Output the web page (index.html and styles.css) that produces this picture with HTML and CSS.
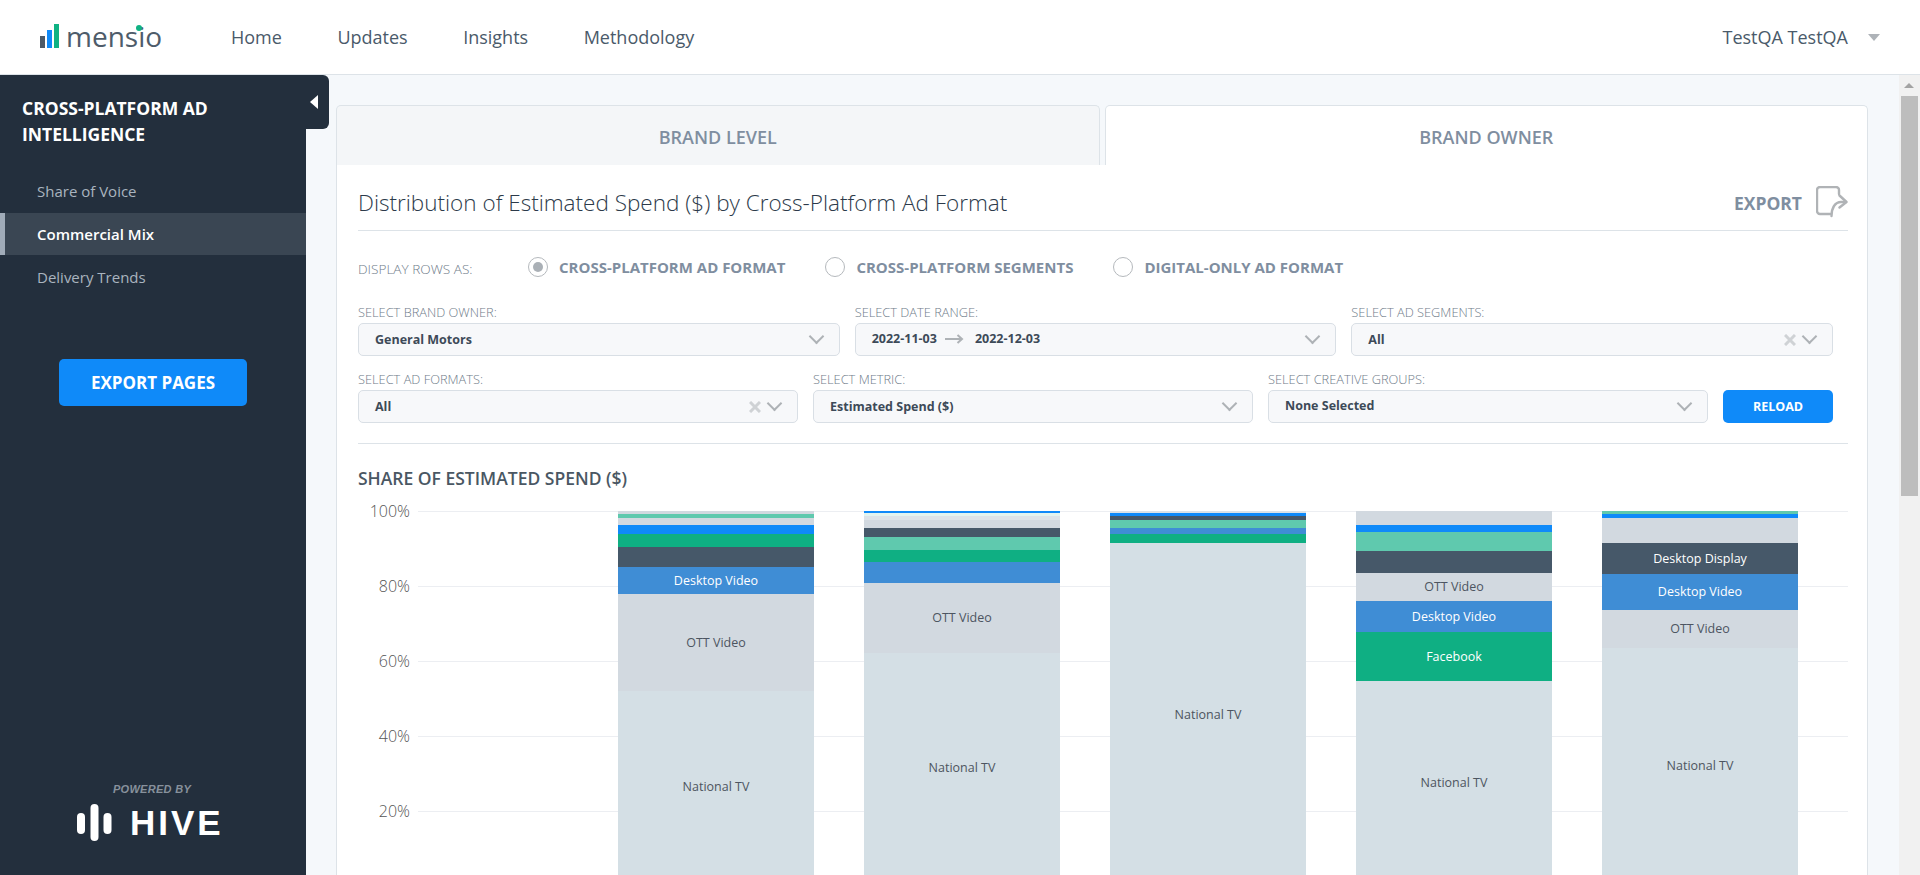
FILE: index.html
```html
<!DOCTYPE html>
<html lang="en">
<head>
<meta charset="utf-8">
<title>Mensio</title>
<link rel="stylesheet" href="styles.css">
</head>
<body>
<header class="topbar">
  <div class="logo">
    <svg class="logo-bars" width="19" height="24" viewBox="0 0 19 24"><rect x="0" y="12" width="5" height="12" fill="#4c5a68"/><rect x="7" y="6" width="5" height="18" fill="#0f8af9"/><rect x="14" y="0" width="5" height="24" fill="#0fb283"/></svg>
    <span class="logo-word">mensio<i class="logo-dot"></i></span>
  </div>
  <nav class="topnav">
    <a>Home</a><a>Updates</a><a>Insights</a><a>Methodology</a>
  </nav>
  <div class="user"><span>TestQA TestQA</span><i class="user-caret"></i></div>
</header>
<div class="shell">
  <aside class="sidebar">
    <div class="side-tab"><i class="side-caret"></i></div>
    <h2 class="side-title">CROSS-PLATFORM AD INTELLIGENCE</h2>
    <ul class="side-menu">
      <li>Share of Voice</li>
      <li class="active">Commercial Mix</li>
      <li>Delivery Trends</li>
    </ul>
    <button class="export-pages">EXPORT PAGES</button>
    <div class="powered">
      <div class="powered-by">POWERED BY</div>
      <div class="hive">
        <svg width="35" height="37" viewBox="0 0 35 37"><rect x="0" y="9" width="8" height="21" rx="4" fill="#fff"/><rect x="13.5" y="0" width="8" height="37" rx="4" fill="#fff"/><rect x="26.5" y="9" width="8" height="21" rx="4" fill="#fff"/></svg>
        <span>HIVE</span>
      </div>
    </div>
  </aside>
  <main class="main">
    <div class="tabs">
      <div class="tab">BRAND LEVEL</div>
      <div class="tab current">BRAND OWNER</div>
    </div>
    <section class="card">
      <div class="card-head">
        <h1>Distribution of Estimated Spend ($) by Cross-Platform Ad Format</h1>
        <div class="export">
          <span>EXPORT</span>
          <svg width="32" height="32" viewBox="0 0 32 32" fill="none" stroke="#b0b3b6" stroke-width="2.4" stroke-linecap="round" stroke-linejoin="round"><path d="M23 8V4a3 3 0 0 0-3-3H4a3 3 0 0 0-3 3v21a3 3 0 0 0 3 3h10"/><path d="M23.500 9.500L30.500 16L23.500 21.500"/><path d="M30 16H25C19 16 15.500 22 15.500 30"/></svg>
        </div>
      </div>
      <div class="radios">
        <span class="radios-label">DISPLAY ROWS AS:</span>
        <label class="radio checked"><i></i>CROSS-PLATFORM AD FORMAT</label>
        <label class="radio"><i></i>CROSS-PLATFORM SEGMENTS</label>
        <label class="radio"><i></i>DIGITAL-ONLY AD FORMAT</label>
      </div>
      <div class="filters">
        <div class="filter">
          <div class="filter-label">SELECT BRAND OWNER:</div>
          <div class="select"><span>General Motors</span><i class="chev"></i></div>
        </div>
        <div class="filter">
          <div class="filter-label">SELECT DATE RANGE:</div>
          <div class="select"><span class="dates raised">2022-11-03<svg width="20" height="10" viewBox="0 0 20 10" fill="none" stroke="#aeb2b6" stroke-width="2"><path d="M1 5H18M13.500 1L18 5L13.500 9"/></svg>2022-12-03</span><i class="chev"></i></div>
        </div>
        <div class="filter">
          <div class="filter-label">SELECT AD SEGMENTS:</div>
          <div class="select"><span>All</span><svg class="clear" width="12" height="12" viewBox="0 0 12 12" fill="none" stroke="#cfd2d5" stroke-width="3"><path d="M1 1L11 11M11 1L1 11"/></svg><i class="chev"></i></div>
        </div>
      </div>
      <div class="filters">
        <div class="filter">
          <div class="filter-label">SELECT AD FORMATS:</div>
          <div class="select"><span>All</span><svg class="clear" width="12" height="12" viewBox="0 0 12 12" fill="none" stroke="#cfd2d5" stroke-width="3"><path d="M1 1L11 11M11 1L1 11"/></svg><i class="chev"></i></div>
        </div>
        <div class="filter">
          <div class="filter-label">SELECT METRIC:</div>
          <div class="select"><span>Estimated Spend ($)</span><i class="chev"></i></div>
        </div>
        <div class="filter">
          <div class="filter-label">SELECT CREATIVE GROUPS:</div>
          <div class="select"><span class="raised">None Selected</span><i class="chev"></i></div>
        </div>
        <button class="reload">RELOAD</button>
      </div>
      <hr class="rule">
      <h3 class="chart-title">SHARE OF ESTIMATED SPEND ($)</h3>
      <div class="chart">
        <div class="axis">
          <span>100%</span><span>80%</span><span>60%</span><span>40%</span><span>20%</span>
        </div>
        <div class="plot">
          <div class="grid"><i></i><i></i><i></i><i></i><i></i></div>
          <div class="bars">
            <div class="bar">
              <div class="seg gray" style="height:3px"></div>
              <div class="seg teal" style="height:4px"></div>
              <div class="seg gray" style="height:7px"></div>
              <div class="seg blue" style="height:9px"></div>
              <div class="seg green" style="height:13px"></div>
              <div class="seg navy" style="height:20px"></div>
              <div class="seg mid" style="height:27px">Desktop Video</div>
              <div class="seg gray" style="height:97px">OTT Video</div>
              <div class="seg tv" style="height:192px">National TV</div>
            </div>
            <div class="bar">
              <div class="seg blue" style="height:2px"></div>
              <div class="seg pale" style="height:3px"></div>
              <div class="seg pale2" style="height:4px"></div>
              <div class="seg gray" style="height:8px"></div>
              <div class="seg navy" style="height:9px"></div>
              <div class="seg teal" style="height:13px"></div>
              <div class="seg green" style="height:12px"></div>
              <div class="seg mid" style="height:21px"></div>
              <div class="seg gray" style="height:70px">OTT Video</div>
              <div class="seg tv" style="height:230px">National TV</div>
            </div>
            <div class="bar">
              <div class="seg pale2" style="height:2px"></div>
              <div class="seg blue" style="height:3px"></div>
              <div class="seg navy" style="height:4px"></div>
              <div class="seg teal" style="height:8px"></div>
              <div class="seg mid" style="height:6px"></div>
              <div class="seg green" style="height:9px"></div>
              <div class="seg tv" style="height:343px">National TV</div>
            </div>
            <div class="bar">
              <div class="seg gray" style="height:14px"></div>
              <div class="seg blue" style="height:7px"></div>
              <div class="seg teal" style="height:19px"></div>
              <div class="seg navy" style="height:22px"></div>
              <div class="seg gray" style="height:28px">OTT Video</div>
              <div class="seg mid" style="height:31px">Desktop Video</div>
              <div class="seg green" style="height:49px">Facebook</div>
              <div class="seg tv" style="height:203px">National TV</div>
            </div>
            <div class="bar">
              <div class="seg teal" style="height:3px"></div>
              <div class="seg blue" style="height:4px"></div>
              <div class="seg gray" style="height:8px"></div>
              <div class="seg gray" style="height:17px"></div>
              <div class="seg navy" style="height:31px">Desktop Display</div>
              <div class="seg mid" style="height:36px">Desktop Video</div>
              <div class="seg gray" style="height:38px">OTT Video</div>
              <div class="seg tv" style="height:236px">National TV</div>
            </div>
          </div>
        </div>
      </div>
    </section>
  </main>
  <div class="scrollbar"><i class="scroll-up"></i><div class="scroll-thumb"></div></div>
</div>
</body>
</html>
```

FILE: styles.css
```css
* { box-sizing: border-box; }
html, body { margin: 0; height: 875px; overflow: hidden; }
body { font-family: "Open Sans", "Liberation Sans", sans-serif; color: #3d4a58; background: #fff; display: flex; flex-direction: column; }
h1, h2, h3, ul { margin: 0; padding: 0; }

/* top bar */
.topbar { flex: 0 0 75px; display: flex; align-items: center; background: #fff; border-bottom: 1px solid #dde3e8; padding-left: 40px; padding-right: 40px; }
.logo { display: flex; align-items: flex-end; width: 191px; height: 24px; margin-top: -2px; }
.logo-bars { flex: none; }
.logo-word { position: relative; font-size: 28px; line-height: 24px; color: #4e5c6a; margin-left: 7px; height: 24px; }
.logo-dot { position: absolute; left: 70px; top: 1px; width: 6px; height: 6px; border-radius: 50%; background: #0fb283; }
.topnav { display: flex; gap: 55.5px; font-size: 18px; color: #4a5a6a; }
.user { margin-left: auto; display: flex; align-items: center; gap: 20px; font-size: 18px; color: #4a5a6a; }
.user-caret { width: 0; height: 0; border-left: 6px solid transparent; border-right: 6px solid transparent; border-top: 7px solid #aeb3b8; }

.shell { flex: 1; display: flex; min-height: 0; }

/* sidebar */
.sidebar { position: relative; flex: 0 0 306px; background: #232f3d; display: flex; flex-direction: column; }
.side-tab { position: absolute; left: 306px; top: 0; width: 23px; height: 54px; background: #232f3d; border-radius: 0 6px 6px 0; display: flex; align-items: center; }
.side-caret { width: 0; height: 0; margin-left: 4px; border-top: 7.5px solid transparent; border-bottom: 7.5px solid transparent; border-right: 8px solid #fff; }
.side-title { font-size: 17.5px; line-height: 26px; font-weight: 700; color: #fff; padding: 20px 60px 0 22px; }
.side-menu { list-style: none; margin-top: 23px; font-size: 15px; color: #a9b4bf; }
.side-menu li { height: 42px; line-height: 42px; padding-left: 37px; margin-bottom: 1px; }
.side-menu li.active { background: #3a4653; color: #fff; font-weight: 600; border-left: 5px solid #a0abb8; padding-left: 32px; }
.export-pages { align-self: flex-start; margin: 60px 0 0 59px; width: 188px; height: 47px; border: 0; border-radius: 5px; background: #0f8af9; color: #fff; font: 700 17px "Open Sans", sans-serif; }
.powered { margin-top: auto; padding: 0 0 34px 77px; }
.powered-by { width: 150px; text-align: center; font: italic 700 11px "Liberation Sans", sans-serif; color: #87919c; margin-bottom: 9px; letter-spacing: 0.3px; }
.hive { display: flex; align-items: center; gap: 18px; color: #fff; font: 700 35px/37px "Liberation Sans", sans-serif; letter-spacing: 3px; }

/* main */
.main { flex: 1; min-width: 0; background: #f5f8fb; padding: 30px 31px 0 30px; }
.tabs { display: flex; gap: 5px; height: 60px; }
.tab { flex: 1; display: flex; align-items: center; justify-content: center; padding-top: 3px; font-size: 18px; font-weight: 600; color: #7f8ea0; background: #f4f6f8; border: 1px solid #dde3e8; border-bottom: 0; border-radius: 5px 5px 0 0; }
.tab.current { background: #fff; }
.card { background: #fff; border-left: 1px solid #dde3e8; border-right: 1px solid #dde3e8; height: 720px; padding: 0 19px 0 21px; }
.card-head { height: 66px; display: flex; align-items: center; justify-content: space-between; border-bottom: 1px solid #dde3e8; padding-top: 10px; }
.card-head h1 { font-size: 22.5px; font-weight: 300; color: #2c3a4a; }
.export { display: flex; align-items: center; gap: 14px; font-size: 17.5px; font-weight: 700; color: #7f8ea0; }
.export svg { display: block; margin-top: -1px; }

.radios { display: flex; align-items: center; gap: 40px; height: 74px; padding-bottom: 2px; font-size: 15px; }
.radios-label { color: #6f7c8a; flex: 0 0 130px; white-space: nowrap; font-size: 13.6px; font-weight: 300; padding-top: 2px; }
.radio { display: flex; align-items: center; gap: 11px; font-weight: 700; color: #7f8ea0; white-space: nowrap; }
.radio i { position: relative; flex: none; width: 20px; height: 20px; border-radius: 50%; border: 1.5px solid #b5b9bd; background: #fff; }
.radio.checked i::after { content: ""; position: absolute; left: 3.5px; top: 3.5px; width: 10px; height: 10px; border-radius: 50%; background: #aab0b6; }

.filters { display: flex; gap: 15px; margin-right: 15px; margin-bottom: 16px; }
.filter { flex: 1; min-width: 0; }
.filter-label { font-size: 12.8px; line-height: 14px; color: #6f7c8a; margin-bottom: 4px; font-weight: 300; }
.select { display: flex; align-items: center; height: 33px; padding: 0 15px 0 16px; background: #f7f8fa; border: 1px solid #d9dfe5; border-radius: 5px; font-size: 12.5px; font-weight: 700; color: #3d4a58; }
.select > span { flex: 1; }
.select > .raised { margin-top: -2px; }
.dates { display: flex; align-items: center; gap: 5px; }
.dates svg { margin: 0 6px 0 2px; }
.chev { flex: none; width: 11px; height: 11px; margin: -6px 2px 0 2px; border-right: 2px solid #aeb2b6; border-bottom: 2px solid #aeb2b6; transform: rotate(45deg); }
.clear { flex: none; margin-right: 6.5px; }
.reload { flex: 0 0 110px; align-self: flex-end; height: 33px; border: 0; border-radius: 5px; background: #0f8af9; color: #fff; font: 700 12.5px "Open Sans", sans-serif; }
.rule { margin: 20px 0 0; border: 0; border-top: 1px solid #dde3e8; }
.chart-title { font-size: 17.5px; line-height: 22px; font-weight: 600; color: #4a5763; margin: 23px 0 22px; }

/* chart */
.chart { display: flex; height: 400px; }
.axis { flex: 0 0 52px; margin-right: 8px; font-size: 16px; font-weight: 300; color: #555; text-align: right; display: flex; flex-direction: column; }
.axis span { height: 74.9px; line-height: 20px; margin-top: -10px; margin-bottom: 10px; }
.plot { position: relative; flex: 1; }
.grid { position: absolute; inset: 0; }
.grid i { display: block; height: 74.9px; border-top: 1px solid #eceef2; }
.bars { position: relative; display: flex; gap: 50px; padding-left: 200px; }
.bar { flex: 0 0 196px; }
.seg { display: flex; align-items: center; justify-content: center; font-size: 12.5px; overflow: hidden; padding-bottom: 1px; }
.gray { background: #d2d9e0; color: #4d5560; }
.tv { background: #d4dfe5; color: #4d5560; }
.teal { background: #5fc9ae; }
.blue { background: #0f8af9; }
.green { background: #0faf83; color: #fff; }
.navy { background: #465869; color: #fff; }
.mid { background: #3f8dd5; color: #fff; }
.pale { background: #e2f4f0; }
.pale2 { background: #dce3e8; }

/* scrollbar */
.scrollbar { flex: 0 0 21px; background: #f1f1f1; position: relative; padding: 21px 2px 0 2px; }
.scroll-up { position: absolute; left: 5px; top: 8px; width: 0; height: 0; border-left: 5px solid transparent; border-right: 5px solid transparent; border-bottom: 5px solid #a3a3a3; }
.scroll-thumb { height: 400px; background: #bdbdbd; }
```
